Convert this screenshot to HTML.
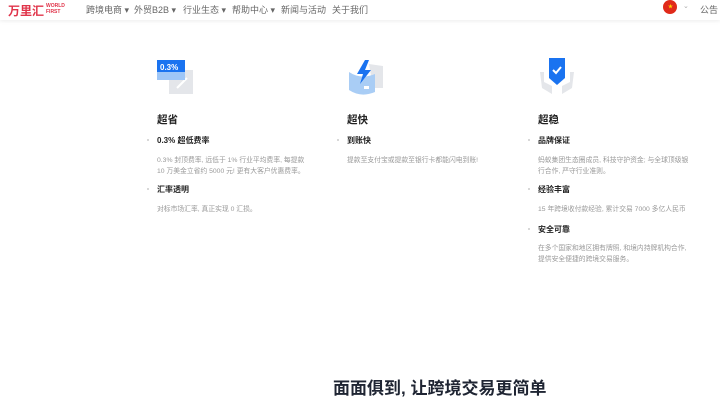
<!DOCTYPE html><html><head><meta charset="utf-8"><style>
body{margin:0;width:720px;height:405px;overflow:hidden;background:#fff;font-family:"Liberation Sans","Noto Sans CJK SC",sans-serif;position:relative}
.hd{position:absolute;left:0;top:0;width:720px;height:20px;background:#fff;box-shadow:0 1px 4px rgba(0,0,0,.08)}
.a{position:absolute;white-space:nowrap}
.nav{top:3px;font-size:9px;color:#666}
.col{position:absolute;top:0;width:180px}
.t{position:absolute;font-size:10.5px;font-weight:bold;color:#222}
.s{position:absolute;font-size:8px;font-weight:bold;color:#222}
.d{position:absolute;font-size:6.8px;color:#999;line-height:11px;width:152px}
.b{position:absolute;width:2px;height:2px;background:#ccc;border-radius:1px;left:-10px;top:4px}
</style></head><body>
<div class="hd"></div>
<div class="a" style="left:8px;top:2px;font-size:12px;font-weight:bold;color:#e0344a">万里汇</div>
<div class="a" style="left:46px;top:3px;font-size:5px;line-height:6px;color:#e0344a;font-weight:bold">WORLD<br>FIRST</div>
<div class="a nav" style="left:86px">跨境电商 ▾</div>
<div class="a nav" style="left:134px">外贸B2B ▾</div>
<div class="a nav" style="left:183px">行业生态 ▾</div>
<div class="a nav" style="left:232px">帮助中心 ▾</div>
<div class="a nav" style="left:281px">新闻与活动</div>
<div class="a nav" style="left:332px">关于我们</div>
<div class="a" style="left:663px;top:0px;width:14px;height:14px;border-radius:7px;background:#e02a1a"></div>
<div class="a" style="left:668px;top:3px;font-size:5px;color:#ffd200">★</div>
<div class="a nav" style="left:683px;top:2px;font-size:7px;color:#aaa">⌄</div>
<div class="a nav" style="left:700px">公告</div>

<div class="col" style="left:157px">
<svg class="a" style="left:0;top:60px" width="40" height="36"><rect x="12" y="10" width="24" height="24" fill="#e4e6ea"/><path d="M20 28 L30 18" stroke="#fff" stroke-width="2"/><rect x="0" y="0" width="28" height="12" fill="#1a73f0"/><rect x="0" y="12" width="28" height="8" fill="#9ec6f7"/><text x="3" y="10" font-size="8" fill="#fff" font-weight="bold" font-family="Liberation Sans">0.3%</text></svg>
<div class="t" style="left:0;top:112px">超省</div>
<div class="s" style="left:0;top:135px"><span class="b"></span>0.3% 超低费率</div>
<div class="d" style="left:0;top:155px">0.3% 封顶费率, 远低于 1% 行业平均费率, 每提款 10 万美金立省约 5000 元! 更有大客户优惠费率。</div>
<div class="s" style="left:0;top:184px"><span class="b"></span>汇率透明</div>
<div class="d" style="left:0;top:204px">对标市场汇率, 真正实现 0 汇损。</div>
</div>
<div class="col" style="left:347px">
<svg class="a" style="left:0;top:58px" width="40" height="40"><path d="M22 6 L36 8 L36 30 L26 30Z" fill="#e4e6ea"/><path d="M2 14 Q14 22 28 16 L28 34 Q14 40 2 32Z" fill="#a9cdf5"/><rect x="17" y="28" width="5" height="3" fill="#fff"/><path d="M18 2 L10 16 L16 16 L13 26 L24 12 L18 12 L22 2Z" fill="#1a73f0"/></svg>
<div class="t" style="left:0;top:112px">超快</div>
<div class="s" style="left:0;top:135px"><span class="b"></span>到账快</div>
<div class="d" style="left:0;top:155px">提款至支付宝或提款至银行卡都能闪电到账!</div>
</div>
<div class="col" style="left:538px">
<svg class="a" style="left:0;top:58px" width="40" height="40"><path d="M2 14 L4 30 L14 36 L14 28 L6 24 L6 14Z" fill="#e4e6ea"/><path d="M36 14 L34 30 L24 36 L24 28 L32 24 L32 14Z" fill="#e4e6ea"/><path d="M11 0 H27 V20 L19 27 L11 20Z" fill="#1a73f0"/><path d="M15 12 L18 15 L23 9" stroke="#fff" stroke-width="2" fill="none"/></svg>
<div class="t" style="left:0;top:112px">超稳</div>
<div class="s" style="left:0;top:135px"><span class="b"></span>品牌保证</div>
<div class="d" style="left:0;top:155px">蚂蚁集团生态圈成员, 科技守护资金; 与全球顶级银行合作, 严守行业准则。</div>
<div class="s" style="left:0;top:184px"><span class="b"></span>经验丰富</div>
<div class="d" style="left:0;top:204px;width:170px">15 年跨境收付款经验, 累计交易 7000 多亿人民币</div>
<div class="s" style="left:0;top:224px"><span class="b"></span>安全可靠</div>
<div class="d" style="left:0;top:243px">在多个国家和地区拥有牌照, 和境内持牌机构合作, 提供安全便捷的跨境交易服务。</div>
</div>
<div class="a" style="left:333px;top:374px;font-size:17px;font-weight:bold;color:#1f2533">面面俱到, 让跨境交易更简单</div>
</body></html>
